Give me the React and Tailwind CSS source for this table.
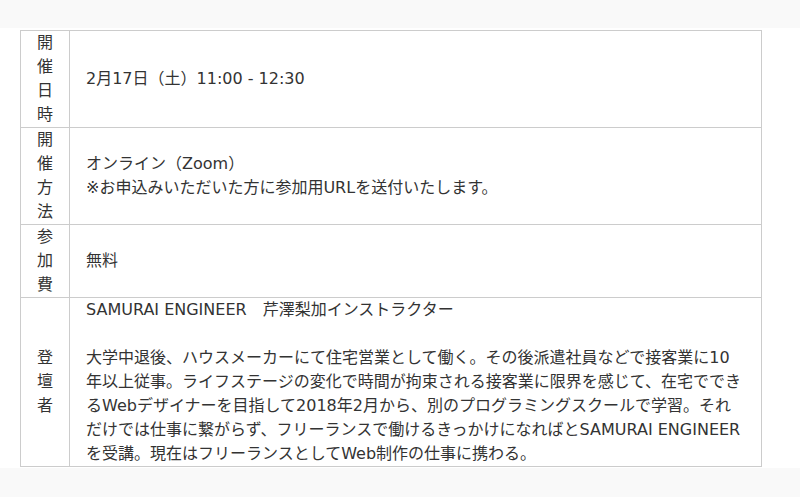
export default function App() {
  const rows = [
    {
      label: "開催日時",
      content: <>2月17日（土）11:00 - 12:30</>,
    },
    {
      label: "開催方法",
      content: (
        <>
          オンライン（Zoom）
          <br />
          ※お申込みいただいた方に参加用URLを送付いたします。
        </>
      ),
    },
    { label: "参加費", content: <>無料</> },
    {
      label: "登壇者",
      content: (
        <>
          SAMURAI ENGINEER　芹澤梨加インストラクター
          <br />
          <br />
          大学中退後、ハウスメーカーにて住宅営業として働く。その後派遣社員などで接客業に10年以上従事。ライフステージの変化で時間が拘束される接客業に限界を感じて、在宅でできるWebデザイナーを目指して2018年2月から、別のプログラミングスクールで学習。それだけでは仕事に繋がらず、フリーランスで働けるきっかけになればとSAMURAI ENGINEERを受講。現在はフリーランスとしてWeb制作の仕事に携わる。
        </>
      ),
    },
  ];
  return (
    <div className="min-h-screen bg-[#f9f9f9] font-['DejaVu_Sans','Noto_Sans_CJK_JP',sans-serif] text-[16px] leading-[24px] text-[#333]">
      <div className="h-[28px]" />
      <div className="bg-white pt-[2px] pb-[1px] pl-[20px]">
        <div className="w-[742px] border border-[#ccc]">
          {rows.map((r, i) => (
            <div
              key={i}
              className={`flex ${i > 0 ? "border-t border-[#ccc]" : ""}`}
            >
              <div className="w-[48px] shrink-0 px-[16px] flex items-center justify-center text-center">
                <span className="block w-[16px]">{r.label}</span>
              </div>
              <div className="flex-1 border-l border-[#ccc] px-[16px] flex items-center">
                <div>{r.content}</div>
              </div>
            </div>
          ))}
        </div>
      </div>
    </div>
  );
}
